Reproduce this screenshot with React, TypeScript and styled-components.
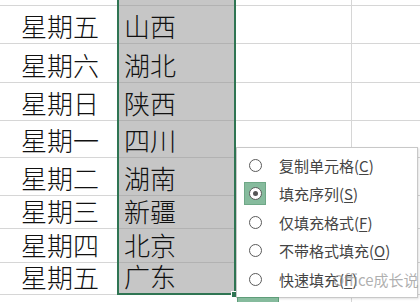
import React from "react";
import styled, { createGlobalStyle } from "styled-components";

const Global = createGlobalStyle`
  html, body { margin: 0; padding: 0; background: #ffffff; }
  body { width: 420px; height: 302px; overflow: hidden; }
`;

const CJK = `"Noto Sans CJK SC", "Noto Sans", sans-serif`;

const Sheet = styled.div`
  position: relative;
  display: flex;
  width: 420px;
  height: 302px;
  overflow: hidden;
  background: #fff;
  font-family: ${CJK};
`;

const Column = styled.div<{ $w?: number; $line?: boolean }>`
  display: flex;
  flex-direction: column;
  box-sizing: border-box;
  ${(p) => (p.$w ? `width: ${p.$w}px; flex: none;` : "flex: 1;")}
  ${(p) => (p.$line ? "border-right: 1px solid #d6d6d6;" : "")}
`;

const Selection = styled.div`
  display: flex;
  flex-direction: column;
  box-sizing: border-box;
  width: 119px;
  flex: none;
  align-self: flex-start;
  background: #c6c6c6;
  border-left: 2px solid #2f7553;
  border-right: 2px solid #2f7553;
  border-bottom: 2px solid #2f7553;
`;

const Cell = styled.div<{ $h: number; $grid?: "light" | "dark" | "none"; $pad?: number }>`
  box-sizing: border-box;
  height: ${(p) => p.$h}px;
  flex: none;
  display: flex;
  align-items: flex-end;
  padding-left: ${(p) => p.$pad ?? 0}px;
  padding-bottom: 4px;
  border-bottom: ${(p) =>
    p.$grid === "none" ? "0" : `1px solid ${p.$grid === "dark" ? "#b2b2b2" : "#d6d6d6"}`};
  font-size: 26px;
  font-weight: 300;
  line-height: 26px;
  color: #111;
  white-space: nowrap;
`;

const FillHandle = styled.div`
  position: absolute;
  left: 231px;
  top: 291px;
  width: 5px;
  height: 5px;
  background: #2f7553;
  border: 1px solid #fff;
`;

const Popup = styled.div`
  position: absolute;
  left: 236px;
  top: 147px;
  width: 182px;
  height: 151px;
  box-sizing: border-box;
  background: #fff;
  border: 1px solid #c8c8c8;
  box-shadow: 1px 1px 2px rgba(0, 0, 0, 0.12);
  padding-top: 3px;
  display: flex;
  flex-direction: column;
`;

const Item = styled.div`
  height: 28.5px;
  display: flex;
  align-items: center;
  flex: none;
`;

const RadioBox = styled.div<{ $on?: boolean }>`
  width: 22px;
  height: 23px;
  margin-left: 7px;
  margin-right: 13px;
  display: flex;
  align-items: center;
  justify-content: center;
  background: ${(p) => (p.$on ? "#86bb9d" : "transparent")};
  border: 1px solid ${(p) => (p.$on ? "#6fa887" : "transparent")};
  box-sizing: border-box;
`;

const Circle = styled.div<{ $on?: boolean }>`
  width: 13px;
  height: 13px;
  box-sizing: border-box;
  border-radius: 50%;
  border: 1px solid #5a5a5a;
  background: #fff;
  display: flex;
  align-items: center;
  justify-content: center;
  &::after {
    content: "";
    width: 5px;
    height: 5px;
    border-radius: 50%;
    background: ${(p) => (p.$on ? "#555" : "transparent")};
  }
`;

const Label = styled.span`
  font-size: 15px;
  color: #444;
  white-space: nowrap;
  u { text-underline-offset: 2px; }
`;

const Watermark = styled.div`
  position: absolute;
  left: 333px;
  top: 270px;
  font-family: ${CJK};
  font-size: 15px;
  line-height: 20px;
  color: rgba(150, 150, 150, 0.75);
  white-space: nowrap;
  pointer-events: none;
`;

const AutoFillButton = styled.div`
  position: absolute;
  left: 237px;
  top: 297px;
  width: 42px;
  height: 12px;
  box-sizing: border-box;
  background: #86bb9d;
  border: 1px solid #5f9d79;
`;

const heights = [6, 38, 39, 38, 37, 38, 33, 34, 32, 8];
const selHeights = [6, 38, 39, 38, 37, 38, 33, 34, 30];
const days = ["", "星期五", "星期六", "星期日", "星期一", "星期二", "星期三", "星期四", "星期五", ""];
const places = ["", "山西", "湖北", "陕西", "四川", "湖南", "新疆", "北京", "广东"];

const items: { text: string; key: string; on?: boolean }[] = [
  { text: "复制单元格", key: "C" },
  { text: "填充序列", key: "S", on: true },
  { text: "仅填充格式", key: "F" },
  { text: "不带格式填充", key: "O" },
  { text: "快速填充", key: "F" },
];

export default function App() {
  return (
    <>
      <Global />
      <Sheet>
        <Column $w={117}>
          {heights.map((h, i) => (
            <Cell key={i} $h={h} $pad={21} $grid={i === heights.length - 1 ? "none" : "light"}>
              {days[i]}
            </Cell>
          ))}
        </Column>
        <Selection>
          {selHeights.map((h, i) => (
            <Cell key={i} $h={h} $pad={5} $grid={i === selHeights.length - 1 ? "none" : "dark"}>
              {places[i]}
            </Cell>
          ))}
        </Selection>
        <Column $w={116} $line>
          {heights.map((h, i) => (
            <Cell key={i} $h={h} $grid={i === heights.length - 1 ? "none" : "light"} />
          ))}
        </Column>
        <Column>
          {heights.map((h, i) => (
            <Cell key={i} $h={h} $grid={i === heights.length - 1 ? "none" : "light"} />
          ))}
        </Column>
        <FillHandle />
        <Popup>
          {items.map((it, i) => (
            <Item key={i}>
              <RadioBox $on={it.on}>
                <Circle $on={it.on} />
              </RadioBox>
              <Label>
                {it.text}(<u>{it.key}</u>)
              </Label>
            </Item>
          ))}
        </Popup>
        <AutoFillButton />
        <Watermark>Office成长说</Watermark>
      </Sheet>
    </>
  );
}
